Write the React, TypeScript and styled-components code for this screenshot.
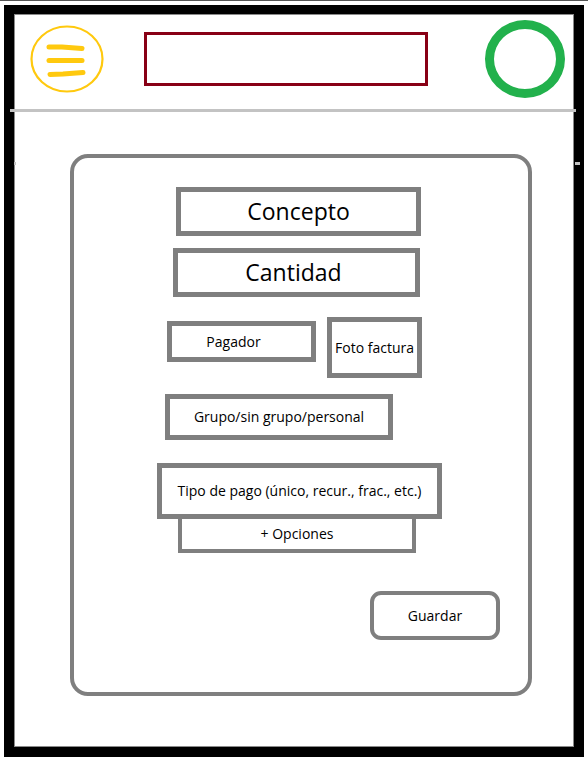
import React from 'react';
import styled, { createGlobalStyle } from 'styled-components';

const GlobalStyle = createGlobalStyle`
  html, body {
    margin: 0;
    padding: 0;
    background: #fff;
  }
  body {
    font-family: 'Open Sans', 'Noto Sans', 'Liberation Sans', sans-serif;
    color: #000;
  }
`;

const Page = styled.div`
  width: 588px;
  height: 761px;
  border-top: 1px solid #555;
  box-sizing: border-box;
  padding: 4px 4px 0 4px;
`;

const Frame = styled.div`
  width: 580px;
  height: 752px;
  box-sizing: border-box;
  border: 10px solid #000;
  border-top-width: 9px;
  box-shadow: inset 0 0 0 1px #8a8a8a;
  display: flex;
  flex-direction: column;
`;

const Header = styled.header`
  height: 95px;
  display: flex;
  align-items: center;
  padding: 0 0 6px 16px;
  box-sizing: border-box;
`;

const MenuIcon = styled.svg`
  width: 74px;
  height: 68px;
  flex: none;
`;

const TitleBox = styled.div`
  width: 284px;
  height: 54px;
  box-sizing: border-box;
  border: 3px solid #880015;
  margin-left: 40px;
  flex: none;
`;

const Avatar = styled.div`
  width: 80px;
  height: 78px;
  box-sizing: border-box;
  border: 9px solid #22b14c;
  border-radius: 50%;
  margin-left: 57px;
  flex: none;
`;

const Divider = styled.div`
  height: 3px;
  background: #c3c3c3;
  margin: 0 -2px 0 -4px;
`;

const Remnant = styled.div`
  display: flex;
  justify-content: space-between;
  margin: 50px -6px 0 0;
  height: 3px;
`;

const Mark = styled.span<{ $w: number }>`
  display: block;
  width: ${p => p.$w}px;
  height: 3px;
  background: #c3c3c3;
`;

const Card = styled.section`
  margin: -11px 0 0 56px;
  width: 462px;
  height: 542px;
  box-sizing: border-box;
  border: 4px solid #7f7f7f;
  border-radius: 18px;
  padding-top: 29px;
  display: flex;
  flex-direction: column;
  align-items: flex-start;
`;

const Field = styled.div<{
  $left: number;
  $w: number;
  $h: number;
  $top?: number;
  $b?: number;
  $size?: number;
  $shift?: number;
}>`
  margin-left: ${p => p.$left - 74}px;
  margin-top: ${p => p.$top ?? 0}px;
  width: ${p => p.$w}px;
  height: ${p => p.$h}px;
  box-sizing: border-box;
  border: ${p => p.$b ?? 5}px solid #7f7f7f;
  display: flex;
  align-items: center;
  justify-content: center;
  padding-right: ${p => (p.$shift ?? 0) * 2}px;
  font-size: ${p => p.$size ?? 14}px;
  line-height: 1;
  white-space: nowrap;
  flex: none;
`;

const SubField = styled(Field)`
  border-top: none;
`;

const Pair = styled.div`
  display: flex;
  align-items: flex-start;
  margin-top: 20px;
`;

const SaveButton = styled.button`
  margin: 38px 0 0 296px;
  width: 130px;
  height: 49px;
  box-sizing: border-box;
  border: 4px solid #7f7f7f;
  border-radius: 11px;
  background: #fff;
  font-family: inherit;
  font-size: 14px;
  color: #000;
  padding: 0;
`;

const App = () => {
  return (
    <>
      <GlobalStyle />
      <Page>
        <Frame>
          <Header>
            <MenuIcon viewBox="0 0 74 68">
              <ellipse cx="37" cy="34" rx="35.5" ry="32.5" fill="none" stroke="#ffc90e" strokeWidth="2.2" />
              <path d="M19 22 L32 22 L52 23.5" fill="none" stroke="#ffc90e" strokeWidth="5" strokeLinecap="round" />
              <path d="M19 35.5 L52 35.5" fill="none" stroke="#ffc90e" strokeWidth="5" strokeLinecap="round" />
              <path d="M20 49.5 L33 49 L53 47.5" fill="none" stroke="#ffc90e" strokeWidth="5" strokeLinecap="round" />
            </MenuIcon>
            <TitleBox />
            <Avatar />
          </Header>
          <Divider />
          <Remnant>
            <Mark $w={2} />
            <Mark $w={5} />
          </Remnant>
          <Card>
            <Field $left={176} $w={245} $h={49} $size={23}>Concepto</Field>
            <Field $left={173} $w={247} $h={49} $top={12} $size={23} $shift={3}>Cantidad</Field>
            <Pair>
              <Field $left={167} $w={149} $h={41} $top={4} $shift={8}>Pagador</Field>
              <Field $left={327 - 316 + 74} $w={95} $h={61}>Foto factura</Field>
            </Pair>
            <Field $left={165} $w={228} $h={46} $top={16}>Grupo/sin grupo/personal</Field>
            <Field $left={157} $w={285} $h={56} $top={23}>Tipo de pago (único, recur., frac., etc.)</Field>
            <SubField $left={178} $w={238} $h={34} $b={4}>+ Opciones</SubField>
            <SaveButton>Guardar</SaveButton>
          </Card>
        </Frame>
      </Page>
    </>
  );
};

export default App;
